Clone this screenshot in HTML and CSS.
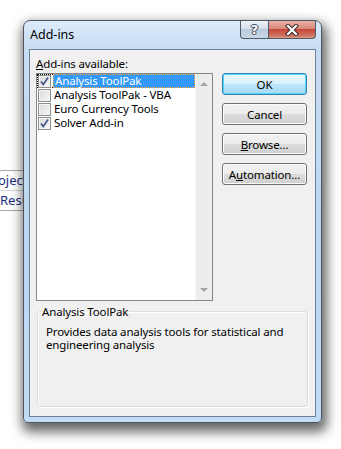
FILE: index.html
```html
<!DOCTYPE html>
<html lang="en">
<head>
    <meta charset="UTF-8">
    <meta name="viewport" content="width=device-width, initial-scale=1.0">
    <title>Add-ins</title>
    <link rel="stylesheet" href="styles.css">
</head>
<body>

    <!-- sheet behind the dialog -->
    <div class="sheet">
        <div class="sheet-cell shift">Project</div>
        <div class="sheet-cell">Results</div>
    </div>

    <div class="dialog">
        <div class="titlebar">
            <span class="title">Add-ins</span>
            <div class="caption-btns">
                <span class="cap-btn help">?</span>
                <span class="cap-btn close">
                    <svg width="16" height="12" viewBox="0 0 16 12">
                        <path d="M4 2 L12 10 M12 2 L4 10" stroke="#3a2a28" stroke-width="4.2" stroke-linecap="square"/>
                        <path d="M4 2 L12 10 M12 2 L4 10" stroke="#fff" stroke-width="2.2" stroke-linecap="square"/>
                    </svg>
                </span>
            </div>
        </div>

        <div class="client">
            <div class="top">
                <div class="label"><u>A</u>dd-ins available:</div>

                <div class="listbox">
                    <ul class="items">
                        <li class="item focused">
                            <span class="check on"></span>
                            <span class="name selected">Analysis ToolPak</span>
                        </li>
                        <li class="item">
                            <span class="check"></span>
                            <span class="name">Analysis ToolPak - VBA</span>
                        </li>
                        <li class="item">
                            <span class="check"></span>
                            <span class="name">Euro Currency Tools</span>
                        </li>
                        <li class="item">
                            <span class="check on"></span>
                            <span class="name">Solver Add-in</span>
                        </li>
                    </ul>
                    <div class="scrollbar">
                        <span class="arrow up"></span>
                        <span class="arrow down"></span>
                    </div>
                </div>

                <div class="buttons">
                    <button class="btn default">OK</button>
                    <button class="btn">Cancel</button>
                    <button class="btn"><u>B</u>rowse...</button>
                    <button class="btn">A<u>u</u>tomation...</button>
                </div>
            </div>

            <fieldset class="group">
                <legend>Analysis ToolPak</legend>
                <p>Provides data analysis tools for statistical and engineering analysis</p>
            </fieldset>
        </div>
    </div>

</body>
</html>
```

FILE: styles.css
```css
/* page */
body {
    margin: 0;
    width: 341px;
    height: 449px;
    overflow: hidden;
    background: #fff;
    font-family: 'Noto Sans', 'Open Sans', sans-serif;
    font-size: 11.5px;
    letter-spacing: -0.15px;
    color: #000;
    position: relative;
}

/* bit of the sheet behind, mostly hidden by the dialog */
.sheet {
    margin-top: 170px;
    width: 90px;
    border-top: 1px solid #a9a9a9;
    border-bottom: 1px solid #a9a9a9;
}

.sheet-cell {
    height: 19px;
    line-height: 19px;
    color: #1a2d80;
    font-size: 13px;
    letter-spacing: 0;
    white-space: nowrap;
}

.sheet-cell.shift { padding-left: 0; margin-left: -15px; border-bottom: 1px solid #d4d4d4; }

/* window */
.dialog {
    position: absolute;
    left: 23px;
    top: 20px;
    width: 299px;
    height: 403px;
    box-sizing: border-box;
    border: 1px solid #4b5561;
    border-radius: 7px 7px 5px 5px;
    background: linear-gradient(180deg, #dcebf9 0, #c6dcf3 28px, #bcd6f1 60%, #c3dcf5 100%);
    box-shadow: 2px 6px 12px 3px rgba(0,0,0,0.6);
    padding: 0 5px 5px 5px;
    display: flex;
    flex-direction: column;
}

.titlebar {
    height: 28px;
    display: flex;
    justify-content: space-between;
    align-items: flex-start;
}

.title {
    margin: 6px 0 0 1px;
    line-height: 15px;
    font-size: 12.5px;
    letter-spacing: 0;
}

.caption-btns { display: flex; }

.cap-btn {
    height: 18px;
    box-sizing: border-box;
    border: 1px solid #4f5b69;
    border-top: none;
    display: flex;
    align-items: center;
    justify-content: center;
}

.help {
    width: 28px;
    border-right: none;
    border-radius: 0 0 0 4px;
    background: linear-gradient(180deg, #eef3f9 0, #d5dfea 45%, #bccadb 50%, #c9d6e5 100%);
    color: #fff;
    font-weight: bold;
    font-size: 13px;
    font-family: 'DejaVu Sans', sans-serif;
    text-shadow: 1px 0 0 #39465a, -1px 0 0 #39465a, 0 1px 0 #39465a, 0 -1px 0 #39465a;
}

.close {
    width: 48px;
    border-radius: 0 0 4px 0;
    background: linear-gradient(180deg, #eab1a5 0, #d9897b 45%, #c5483a 50%, #d0705f 85%, #de9a86 100%);
}

/* client area */
.client {
    flex: 1;
    background: #f0f0f0;
    border: 1px solid #6f8094;
    padding: 6px 8px 9px 6px;
    display: flex;
    flex-direction: column;
}

.top {
    display: grid;
    grid-template-columns: 177px 85px;
    column-gap: 9px;
    grid-template-rows: 15px auto;
    row-gap: 2px;
}

.label { line-height: 15px; }

.listbox {
    grid-column: 1;
    height: 228px;
    box-sizing: border-box;
    border: 1px solid #828790;
    background: #fff;
    display: flex;
}

.items {
    flex: 1;
    margin: 0;
    padding: 0;
    list-style: none;
}

.item {
    height: 14px;
    box-sizing: border-box;
    display: flex;
    align-items: center;
    border: 1px solid transparent;
    border-right: none;
}

.item.focused { border-color: #000; border-style: dotted; border-right-style: none; }

.check {
    width: 13px;
    height: 13px;
    flex: none;
    box-sizing: border-box;
    border: 1px solid #8e8f8f;
    background: linear-gradient(135deg, #d8d8d8 0, #f2f2f2 80%);
    box-shadow: inset 0 0 0 1px #f4f4f4;
    margin: 0 1px 0 0;
}

.check.on {
    background:
        url("data:image/svg+xml;utf8,<svg xmlns='http://www.w3.org/2000/svg' width='11' height='11' viewBox='0 0 11 11'><path d='M2 5.5 L4.3 8.5 L9 1.5' fill='none' stroke='%234a5b8c' stroke-width='1.8'/></svg>") center/11px 11px no-repeat,
        linear-gradient(135deg, #d8d8d8 0, #f2f2f2 80%);
}

.name {
    margin-left: 1px;
    padding-left: 1px;
    line-height: 12px;
    white-space: nowrap;
}

.name.selected {
    flex: 1;
    align-self: stretch;
    margin: -1px 0 -1px 1px;
    border: 1px dotted #ffa64d;
    background: #3399ff;
    color: #fff;
    line-height: 12px;
}

.scrollbar {
    width: 17px;
    flex: none;
    background: #ededed;
    box-shadow: inset 1px 0 0 #f5f5f5;
    display: flex;
    flex-direction: column;
    justify-content: space-between;
    align-items: center;
    padding: 8px 0 8px;
}

.arrow {
    width: 0;
    height: 0;
    border-left: 4px solid transparent;
    border-right: 4px solid transparent;
}

.arrow.up { border-bottom: 4px solid #a3a3a3; }
.arrow.down { border-top: 4px solid #a3a3a3; }

/* buttons */
.buttons {
    display: flex;
    flex-direction: column;
    gap: 8px;
}

.btn {
    height: 22px;
    padding: 0;
    border: 1px solid #707070;
    border-radius: 3px;
    background: linear-gradient(180deg, #f2f2f2 0, #ebebeb 50%, #dddddd 50%, #cfcfcf 100%);
    box-shadow: inset 0 0 0 1px #fcfcfc;
    font-family: inherit;
    font-size: 11.5px;
    letter-spacing: -0.15px;
    color: #000;
}

.btn.default {
    border-color: #3c7fb1;
    box-shadow: inset 0 0 0 1px #48d8fb;
    background: linear-gradient(180deg, #eaf6fd 0, #d9f0fc 50%, #bee6fd 50%, #a7d9f5 100%);
}

/* description group */
.group {
    flex: 1;
    margin: 3px 0 0 1px;
    padding: 6px 8px 0 8px;
    width: 271px;
    box-sizing: border-box;
    border: 1px solid #d5dfe5;
    border-radius: 3px;
    box-shadow: inset 1px 1px 0 #fff, 1px 1px 0 #fff;
}

.group legend {
    padding: 0 1px;
    margin-left: -5px;
    line-height: 15px;
}

.group p {
    margin: 0;
    line-height: 13px;
}
```
